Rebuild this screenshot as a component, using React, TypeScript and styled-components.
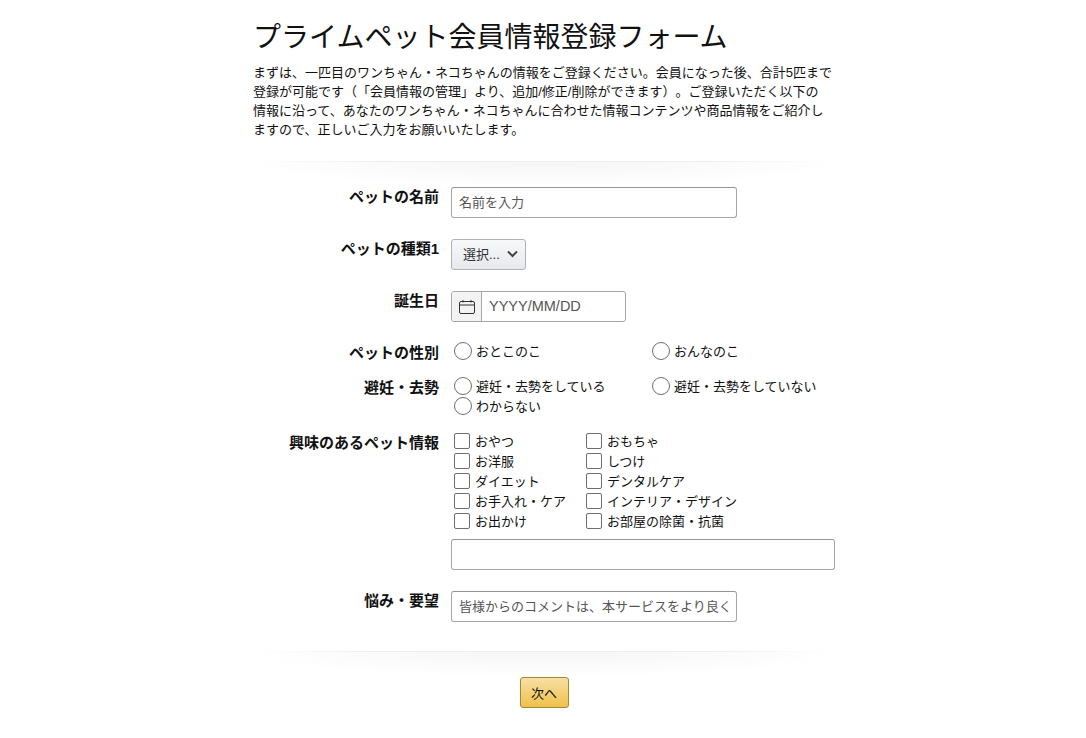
import { FC } from "react";
import styled, { createGlobalStyle } from "styled-components";

const GlobalStyle = createGlobalStyle`
    html, body {
        margin: 0;
        padding: 0;
        background: #fff;
        color: #111;
        font-family: "Liberation Sans", "Noto Sans CJK JP", sans-serif;
        text-spacing-trim: space-all;
    }
`;

const Page = styled.div`
    width: 580px;
    margin: 0 auto;
    padding: 20px 0 0 2px;
`;

const Title = styled.h1`
    margin: 0 0 0 -1px;
    font-size: 28px;
    line-height: 36px;
    font-weight: 400;
    color: #111;
`;

const Intro = styled.p`
    margin: 7px 0 0 -1px;
    font-size: 13px;
    line-height: 19px;
    white-space: nowrap;
`;

const Divider = styled.div<{ $top: number }>`
    height: 26px;
    margin-top: ${(p) => p.$top}px;
    background:
        linear-gradient(to right, #fff, #eee 22%, #eee 78%, #fff) top / 100% 1px no-repeat,
        radial-gradient(ellipse 52% 26px at 50% 0, #f5f5f5 0%, #fafafa 50%, #fff 100%);
`;

const Form = styled.form`
    display: flex;
    flex-direction: column;
`;

const Row = styled.div<{ $mb: number }>`
    display: grid;
    grid-template-columns: 185px 1fr;
    column-gap: 12px;
    margin-bottom: ${(p) => p.$mb}px;
`;

const Label = styled.label<{ $pt?: number }>`
    padding-top: ${(p) => p.$pt ?? 0}px;
    text-align: right;
    font-size: 15px;
    line-height: 20px;
    font-weight: 700;
    color: #111;
    white-space: nowrap;
`;

const TextInput = styled.input<{ $width: number }>`
    display: block;
    box-sizing: border-box;
    width: ${(p) => p.$width}px;
    height: 31px;
    padding: 0 7px;
    border: 1px solid #a6a6a6;
    border-top-color: #949494;
    border-radius: 3px;
    outline: none;
    background: #fff;
    font-family: inherit;
    font-size: 13px;
    color: #333;
    &::placeholder {
        color: #555;
        opacity: 1;
    }
`;

const SelectButton = styled.button`
    display: flex;
    align-items: center;
    box-sizing: border-box;
    width: 75px;
    height: 31px;
    padding: 0 0 2px 11px;
    border: 1px solid #adb1b8;
    border-radius: 3px;
    background: linear-gradient(to bottom, #f7f8fa, #e7e9ec);
    font-family: inherit;
    font-size: 13px;
    color: #333;
    svg {
        margin-left: 7px;
    }
`;

const DateBox = styled.div`
    display: flex;
    box-sizing: border-box;
    width: 175px;
    height: 31px;
    border: 1px solid #a6a6a6;
    border-radius: 3px;
    overflow: hidden;
`;

const DateIcon = styled.span`
    display: flex;
    align-items: center;
    justify-content: center;
    width: 29px;
    flex: none;
    border-right: 1px solid #a6a6a6;
    background: #f3f3f3;
`;

const DateText = styled.span`
    padding-left: 7px;
    font-size: 14.5px;
    line-height: 29px;
    color: #555;
`;

const RadioGrid = styled.div`
    display: grid;
    grid-template-columns: 198px 1fr;
    padding-left: 3px;
`;

const ChoiceRow = styled.div`
    display: flex;
    align-items: center;
    height: 20px;
    font-size: 13px;
    color: #111;
    white-space: nowrap;
`;

const ChoiceText = styled.span`
    margin-bottom: 2px;
`;

const Radio = styled.span`
    box-sizing: border-box;
    width: 18px;
    height: 18px;
    margin-right: 4px;
    flex: none;
    border: 1px solid #6f6f6f;
    border-radius: 50%;
    background: #fff;
`;

const CheckGrid = styled.div`
    display: grid;
    grid-template-columns: 132px 1fr;
    padding-left: 3px;
    margin-bottom: 8px;
`;

const Check = styled.span`
    box-sizing: border-box;
    width: 16px;
    height: 16px;
    margin-right: 5px;
    flex: none;
    border: 1px solid #6f6f6f;
    border-radius: 2px;
    background: #fff;
`;

const Actions = styled.div`
    display: flex;
    justify-content: center;
`;

const NextButton = styled.button`
    box-sizing: border-box;
    width: 49px;
    height: 31px;
    padding: 0;
    border: 1px solid #a88734;
    border-radius: 3px;
    background: linear-gradient(to bottom, #f7dfa5, #f0c14b);
    font-family: inherit;
    font-size: 13px;
    color: #111;
`;

const CalendarIcon: FC = () => (
    <svg width="16" height="16" viewBox="0 0 16 16" fill="none" stroke="#333" strokeWidth="1">
        <rect x="0.5" y="2.5" width="15" height="12" rx="1.5" />
        <path d="M0.5 6H15.5M4 1V3.5M12 1V3.5" />
    </svg>
);

const ChevronIcon: FC = () => (
    <svg width="11" height="8" viewBox="0 0 11 8" fill="none" stroke="#444" strokeWidth="2">
        <path d="M1 1.5L5.5 6L10 1.5" />
    </svg>
);

const interests = [
    "おやつ", "おもちゃ",
    "お洋服", "しつけ",
    "ダイエット", "デンタルケア",
    "お手入れ・ケア", "インテリア・デザイン",
    "お出かけ", "お部屋の除菌・抗菌",
];

const neuter = ["避妊・去勢をしている", "避妊・去勢をしていない", "わからない"];

export default function App() {
    return (
        <Page>
            <GlobalStyle />
            <Title>プライムペット会員情報登録フォーム</Title>
            <Intro>
                まずは、一匹目のワンちゃん・ネコちゃんの情報をご登録ください。会員になった後、合計5匹まで
                <br />
                登録が可能です（「会員情報の管理」より、追加/修正/削除ができます）。ご登録いただく以下の
                <br />
                情報に沿って、あなたのワンちゃん・ネコちゃんに合わせた情報コンテンツや商品情報をご紹介し
                <br />
                ますので、正しいご入力をお願いいたします。
            </Intro>
            <Divider $top={22} />
            <Form>
                <Row $mb={21}>
                    <Label>ペットの名前</Label>
                    <TextInput $width={286} placeholder="名前を入力" />
                </Row>
                <Row $mb={21}>
                    <Label>ペットの種類1</Label>
                    <SelectButton type="button">
                        選択...
                        <ChevronIcon />
                    </SelectButton>
                </Row>
                <Row $mb={19}>
                    <Label>誕生日</Label>
                    <DateBox>
                        <DateIcon>
                            <CalendarIcon />
                        </DateIcon>
                        <DateText>YYYY/MM/DD</DateText>
                    </DateBox>
                </Row>
                <Row $mb={13}>
                    <Label $pt={2}>ペットの性別</Label>
                    <RadioGrid>
                        <ChoiceRow><Radio /><ChoiceText>おとこのこ</ChoiceText></ChoiceRow>
                        <ChoiceRow><Radio /><ChoiceText>おんなのこ</ChoiceText></ChoiceRow>
                    </RadioGrid>
                </Row>
                <Row $mb={15}>
                    <Label $pt={2}>避妊・去勢</Label>
                    <RadioGrid>
                        {neuter.map((item) => (
                            <ChoiceRow key={item}><Radio /><ChoiceText>{item}</ChoiceText></ChoiceRow>
                        ))}
                    </RadioGrid>
                </Row>
                <Row $mb={21}>
                    <Label $pt={2}>興味のあるペット情報</Label>
                    <div>
                        <CheckGrid>
                            {interests.map((item) => (
                                <ChoiceRow key={item}><Check /><ChoiceText>{item}</ChoiceText></ChoiceRow>
                            ))}
                        </CheckGrid>
                        <TextInput $width={384} />
                    </div>
                </Row>
                <Row $mb={0}>
                    <Label>悩み・要望</Label>
                    <TextInput
                        $width={286}
                        placeholder="皆様からのコメントは、本サービスをより良くするために活用させていただきます"
                    />
                </Row>
                <Divider $top={29} />
                <Actions>
                    <NextButton type="button">次へ</NextButton>
                </Actions>
            </Form>
        </Page>
    );
}
